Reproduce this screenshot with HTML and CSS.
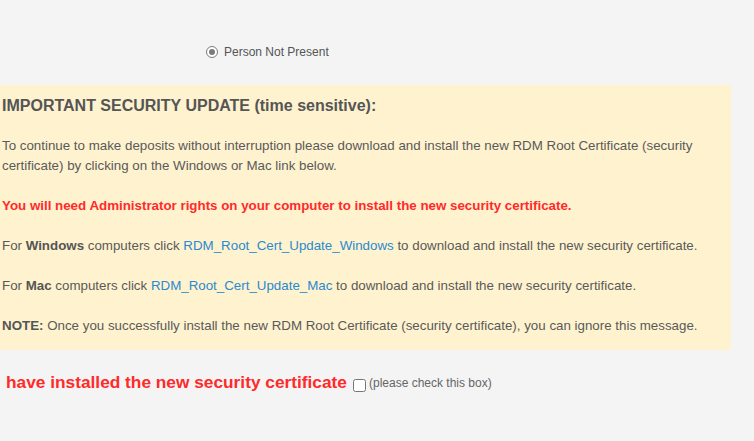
FILE: index.html
```html
<!DOCTYPE html>
<html>
<head>
<meta charset="utf-8">
<link rel="stylesheet" href="styles.css">
</head>
<body>
<div class="presence">
  <span class="radio"><span class="dot"></span></span>
  <span class="presence-label">Person Not Present</span>
</div>
<div class="notice">
  <h2 class="notice-title">IMPORTANT SECURITY UPDATE (time sensitive):</h2>
  <p>To continue to make deposits without interruption please download and install the new RDM Root Certificate (security certificate) by clicking on the Windows or Mac link below.</p>
  <p class="warn">You will need Administrator rights on your computer to install the new security certificate.</p>
  <p>For <b>Windows</b> computers click <a href="#">RDM_Root_Cert_Update_Windows</a> to download and install the new security certificate.</p>
  <p>For <b>Mac</b> computers click <a href="#">RDM_Root_Cert_Update_Mac</a> to download and install the new security certificate.</p>
  <p><b>NOTE:</b> Once you successfully install the new RDM Root Certificate (security certificate), you can ignore this message.</p>
</div>
<div class="confirm">
  <span class="confirm-text">have installed the new security certificate</span>
  <input type="checkbox" class="check">
  <span class="hint">(please check this box)</span>
</div>
</body>
</html>
```
FILE: styles.css
```css
html, body {
  margin: 0;
  padding: 0;
  background: #f4f4f4;
  font-family: "Liberation Sans", Arial, sans-serif;
  color: #5a5a5a;
}
body {
  width: 754px;
  height: 441px;
  overflow: hidden;
}
.presence {
  display: flex;
  align-items: center;
  padding: 44px 0 0 206px;
  height: 16px;
  font-size: 12px;
}
.radio {
  width: 10px;
  height: 10px;
  border: 1px solid #7a7a7a;
  border-radius: 50%;
  display: flex;
  align-items: center;
  justify-content: center;
  background: #fff;
  margin-right: 6px;
}
.dot {
  width: 6px;
  height: 6px;
  border-radius: 50%;
  background: #7a7a7a;
}
.presence-label {
  color: #555;
}
.notice {
  margin-top: 25px;
  width: 727px;
  background: #fff2cf;
  padding: 11px 2px 14px 2px;
  font-size: 13.33px;
  line-height: 20px;
}
.notice-title {
  margin: 0;
  font-size: 16px;
  line-height: 20px;
  font-weight: bold;
  color: #555;
}
.notice p {
  margin: 20px 0 0 0;
}
.notice b {
  color: #555;
}
.notice a {
  color: #2a8ad0;
  text-decoration: none;
}
.notice .warn {
  color: #ff2a2a;
  font-weight: bold;
}
.confirm {
  display: flex;
  align-items: center;
  padding: 22px 0 0 6px;
}
.confirm-text {
  color: #ff2a2a;
  font-weight: bold;
  font-size: 17.3px;
}
.check {
  width: 13px;
  height: 13px;
  margin: 5px 3px 0 6px;
}
.hint {
  font-size: 12px;
  color: #666;
  margin-top: 1px;
}
```
